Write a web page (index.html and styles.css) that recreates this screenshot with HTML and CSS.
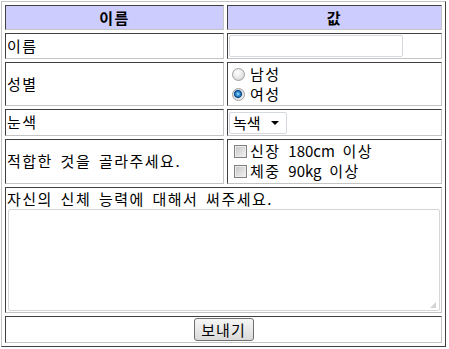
FILE: index.html
```html
<!DOCTYPE html>
<html lang="ko">
<head>
    <meta charset="UTF-8">
    <title>신체 정보 입력</title>
    <link rel="stylesheet" href="styles.css">
</head>
<body>
    <form class="survey">
        <table class="form-table">
            <tr class="row-head">
                <th class="col-label">이름</th>
                <th>값</th>
            </tr>
            <tr class="row-line">
                <td>이름</td>
                <td><input type="text" class="text-input"></td>
            </tr>
            <tr class="row-pair">
                <td>성별</td>
                <td>
                    <label class="choice"><input type="radio" name="gender" class="radio"><span>남성</span></label>
                    <label class="choice"><input type="radio" name="gender" class="radio" checked><span>여성</span></label>
                </td>
            </tr>
            <tr class="row-line">
                <td>눈색</td>
                <td>
                    <span class="select-wrap">
                        <select class="select">
                            <option>녹색</option>
                            <option>갈색</option>
                            <option>파란색</option>
                        </select>
                    </span>
                </td>
            </tr>
            <tr class="row-pair tall">
                <td>적합한 것을 골라주세요.</td>
                <td>
                    <label class="choice"><input type="checkbox" class="check"><span>신장 <span class="num">180cm</span> 이상</span></label>
                    <label class="choice"><input type="checkbox" class="check"><span>체중 <span class="num">90kg</span> 이상</span></label>
                </td>
            </tr>
            <tr class="row-area">
                <td colspan="2">
                    <div class="ask">자신의 신체 능력에 대해서 써주세요.</div>
                    <div class="area-wrap"><textarea class="area"></textarea></div>
                </td>
            </tr>
            <tr class="row-send">
                <td colspan="2" class="actions"><button type="button" class="send-btn">보내기</button></td>
            </tr>
        </table>
    </form>
</body>
</html>
```

FILE: styles.css
```css
* { box-sizing: border-box; }
body { margin: 0; padding: 1px; background: #fff; color: #000; font-family: "Noto Sans CJK KR", "Noto Sans", sans-serif; font-size: 15px; letter-spacing: 1.5px; word-spacing: 2px; }

.form-table { width: 445px; border-collapse: separate; border-spacing: 3px; border: 1px solid; border-color: #c4c4c4 #404040 #404040 #c4c4c4; }
.form-table th, .form-table td { border: 1px solid; border-color: #404040 #c4c4c4 #c4c4c4 #404040; padding: 1px; line-height: 20px; text-align: left; vertical-align: middle; font-weight: normal; }
.form-table th { background: #ccccff; text-align: center; font-weight: bold; }
.form-table .col-label { width: 219px; }
.form-table .actions { text-align: center; }

.row-head th { height: 25px; }
.row-line td { height: 25px; }
.row-pair td { height: 43px; }
.row-pair.tall td { height: 45px; }
.row-area td { height: 126px; vertical-align: top; }
.row-send td { height: 26px; }

.text-input { display: block; width: 174px; height: 22px; border: 1px solid #d4d9e0; border-radius: 2px; font: inherit; padding: 0 3px; }

.choice { display: flex; align-items: center; height: 20px; }
.num { letter-spacing: 0; }

.radio { appearance: none; flex: none; margin: 0 5px 0 3px; width: 13px; height: 13px; border-radius: 50%; border: 1px solid #a0a0a0; background: radial-gradient(circle at 40% 35%, #ffffff 0%, #e6e6e6 55%, #c4c4c4 100%); }
.radio:checked { background: radial-gradient(circle at 45% 45%, #a8dcff 0%, #2a8ad4 25%, #0b4a86 42%, #dcdcdc 52%, #f0f0f0 70%, #c8c8c8 100%); }

.check { appearance: none; flex: none; margin: 0 3px 0 5px; width: 13px; height: 13px; border: 1px solid #808080; background: linear-gradient(135deg, #c4c4c4, #f4f4f4); box-shadow: inset 0 0 0 1px #ececec; }

.select-wrap { position: relative; display: inline-block; vertical-align: middle; }
.select { appearance: none; display: block; width: 58px; height: 22px; border: 1px solid #d4d9e0; border-radius: 2px; background: #fff; font: inherit; padding: 0 3px; color: #000; }
.select-wrap::after { content: ""; position: absolute; right: 8px; top: 9px; border-left: 4px solid transparent; border-right: 4px solid transparent; border-top: 4px solid #000; }

.ask { line-height: 20px; }
.area-wrap { position: relative; padding-left: 1px; }
.area { display: block; width: 432px; height: 102px; border: 1px solid #d6d6d6; border-radius: 2px; resize: none; font: inherit; }
.area-wrap::after { content: ""; position: absolute; right: 4px; bottom: 3px; width: 6px; height: 6px; background:
    radial-gradient(circle, #a0a0a0 0.6px, transparent 0.8px) 0 0 / 2px 2px; clip-path: polygon(100% 0, 100% 100%, 0 100%); }

.send-btn { display: inline-block; vertical-align: middle; width: 60px; height: 23px; border: 1px solid #707070; border-radius: 3px; background: linear-gradient(#f6f6f6, #dadada); font: inherit; letter-spacing: 1px; padding: 0; line-height: 20px; }
```
